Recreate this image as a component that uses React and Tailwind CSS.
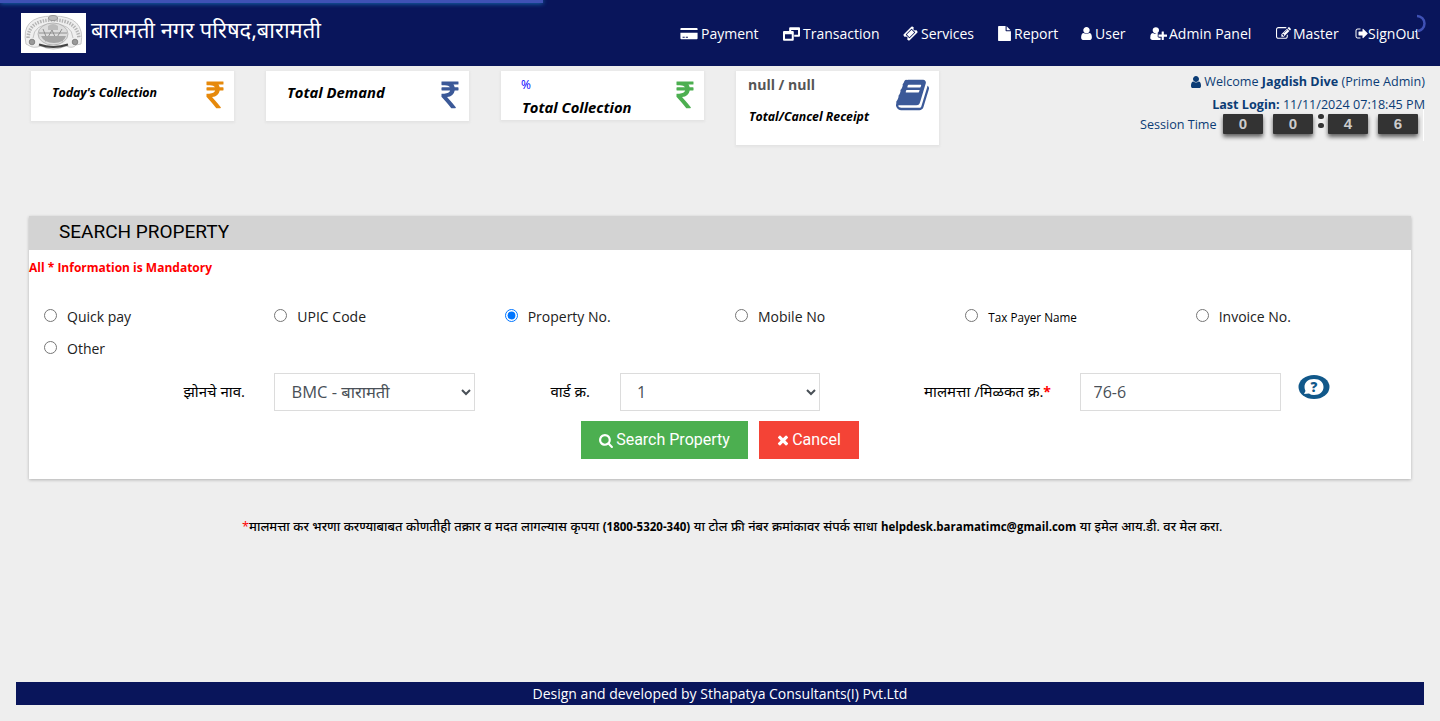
const P = {
  user: [1280, "M1280 1399q0 109-62.5 187t-150.5 78h-854q-88 0-150.5-78t-62.5-187q0-85 8.5-160.5t31.5-152 58.5-131 94-89 134.5-34.5q131 128 313 128t313-128q76 0 134.5 34.5t94 89 58.5 131 31.5 152 8.5 160.5zm-256-887q0 159-112.5 271.5t-271.5 112.5-271.5-112.5-112.5-271.5 112.5-271.5 271.5-112.5 271.5 112.5 112.5 271.5z"],
  userPlus: [2048, "M704 896q-159 0-271.5-112.5t-112.5-271.5 112.5-271.5 271.5-112.5 271.5 112.5 112.5 271.5-112.5 271.5-271.5 112.5zM1664 1024h352q32 0 32 32v192q0 32-32 32h-352v352q0 32-32 32h-192q-32 0-32-32v-352h-352q-32 0-32-32v-192q0-32 32-32h352v-352q0-32 32-32h192q32 0 32 32zM928 1248q0 66 47 113t113 47h192v230q-50 26-110 26h-874q-121 0-194-69.500t-73-189.500q0-390 150-502q70-55 180-55q20 0 50 24q100 70 195 70t195-70q30-24 50-24q110 0 178 60q-99 0-99 110z"],
  file: [1536, "M1024 512v-472q22 14 36 28l408 408q14 14 28 36h-472zm-128 32q0 40 28 68t68 28h544v1056q0 40-28 68t-68 28h-1344q-40 0-68-28t-28-68v-1600q0-40 28-68t68-28h800v544z"],
  edit: [1792, "M888 1184l116-116-152-152-116 116v56h96v96h56zm440-720q-16-16-33 1l-350 350q-17 17-1 33t33-1l350-350q17-17 1-33zm80 594v190q0 119-84.5 203.5t-203.5 84.5h-832q-119 0-203.5-84.5t-84.5-203.5v-832q0-119 84.5-203.5t203.5-84.5h832q63 0 117 25 15 7 18 23 3 17-9 29l-49 49q-14 14-32 8-23-6-45-6h-832q-66 0-113 47t-47 113v832q0 66 47 113t113 47h832q66 0 113-47t47-113v-126q0-13 9-22l64-64q15-15 35-7t20 29zm-96-738l288 288-672 672h-288v-288zm444 132l-92 92-288-288 92-92q28-28 68-28t68 28l152 152q28 28 28 68t-28 68z"],
  signOut: [1664, "M704 1440q0 4 1 20t.5 26.500-3 23.500-10 19.500-20.500 6.500h-320q-119 0-203.500-84.500t-84.500-203.500v-704q0-119 84.500-203.500t203.500-84.500h320q13 0 22.500 9.500t9.500 22.500q0 4 1 20t.5 26.500-3 23.500-10 19.500-20.500 6.500h-320q-66 0-113 47t-47 113v704q0 66 47 113t113 47h312l11.500 1 11.500 3 8 5.500 7 9 2 13.500zm928-544q0 26-19 45l-544 544q-19 19-45 19t-45-19-19-45v-288h-448q-26 0-45-19t-19-45v-384q0-26 19-45t45-19h448v-288q0-26 19-45t45-19 45 19l544 544q19 19 19 45z"],
  card: [2048, "M100 224h1848q100 0 100 100v156H0V324q0-100 100-100zM0 800h2048v668q0 100-100 100H100q-100 0-100-100zM256 1280v128h256v-128zM640 1280v128h256v-128z"],
  restore: [2048, "M860 128h1070q118 0 118 118v930q0 118-118 118h-580v-250h460V480H990v120H742V246q0-118 118-118zM118 600h1060q118 0 118 118v928q0 118-118 118H118q-118 0-118-118V718q0-118 118-118zM240 1000v514h816v-514z"],
  ticket: [1792, "M1024 452l316 316-572 572-316-316zM814 1431l618-618q19-19 19-45t-19-45l-362-362q-18-18-45-18t-45 18l-618 618q-19 19-19 45t19 45l362 362q18 18 45 18t45-18zM1702 794l-907 908q-37 37-90.5 37t-90.500-37l-126-126q56-56 56-136t-56-136-136-56-136 56l-125-126q-37-37-37-90.500t37-90.500l907-906q37-37 90.500-37t90.500 37l125 125q-56 56-56 136t56 136 136 56 136-56l126 125q37 37 37 90.500t-37 90.500z"],
  search: [1664, "M1152 832q0-185-131.5-316.500t-316.500-131.500-316.500 131.500-131.500 316.500 131.500 316.500 316.500 131.500 316.500-131.500 131.500-316.500zm512 832q0 52-38 90t-90 38q-54 0-90-38l-343-342q-179 124-399 124-143 0-273.500-55.500t-225-150-150-225-55.500-273.500 55.500-273.500 150-225 225-150 273.500-55.500 273.500 55.500 225 150 150 225 55.500 273.500q0 220-124 399l343 343q37 37 37 90z"],
  close: [1408, "M1298 1322q0 40-28 68l-136 136q-28 28-68 28t-68-28l-294-294-294 294q-28 28-68 28t-68-28l-136-136q-28-28-28-68t28-68l294-294-294-294q-28-28-28-68t28-68l136-136q28-28 68-28t68 28l294 294 294-294q28-28 68-28t68 28l136 136q28 28 28 68t-28 68l-294 294 294 294q28 28 28 68z"],
  rupee: [898, "M898 470v102q0 14-9 23t-23 9h-168q-23 144-129 234t-276 110q167 178 459 536 14 16 4 34-8 18-29 18h-195q-16 0-25-12-306-367-498-571-9-9-9-22v-127q0-13 9.500-22.500t22.500-9.500h112q132 0 212.500-43t102.500-125h-427q-14 0-23-9t-9-23v-102q0-14 9-23t23-9h413q-57-113-268-113h-145q-13 0-22.500-9.500t-9.500-22.500v-133q0-14 9-23t23-9h832q14 0 23 9t9 23v102q0 14-9 23t-23 9h-233q47 61 64 144h171q14 0 23 9t9 23z"],
  book: [1664, "M1639 478q40 57 18 129l-275 906q-19 64-76.500 107.500t-122.500 43.500h-923q-77 0-148.500-53.500t-99.500-131.500q-24-67-2-127 0-4 3-27t4-37q1-8-3-21.500t-3-19.500q2-11 8-21t16.500-23.500 16.500-23.500q23-38 45-91.500t30-91.500q3-10 .5-30t-.5-28q3-11 17-28t17-23q21-36 42-92t25-90q1-9-2.500-32t.5-28q4-13 22-30.500t22-22.500q19-26 42.500-84.500t27.500-96.500q1-8-3-25.500t-2-26.500q2-8 9-18t18-23 17-21q8-12 16.500-30.500t15-35 16-36 19.500-32 26.500-23.500 36-11.500 47.500 5.500l-1 3q38-9 51-9h761q74 0 114 56t18 130l-274 906q-36 119-71.500 153.500t-128.500 34.500h-869q-27 0-38 15-11 16-1 43 24 70 144 70h923q29 0 56-15.500t35-41.500l300-987q7-22 5-57 38 15 59 43zm-1064 2q-4 13 2 22.500t20 9.500h608q13 0 25.500-9.500t16.500-22.500l21-64q4-13-2-22.500t-20-9.500h-608q-13 0-25.500 9.500t-16.500 22.500zm-83 256q-4 13 2 22.500t20 9.500h608q13 0 25.500-9.500t16.500-22.500l21-64q4-13-2-22.500t-20-9.500h-608q-13 0-25.500 9.500t-16.500 22.500z"],
};

function Icon({ name, className }) {
  return (
    <svg viewBox={`0 0 ${P[name][0]} 1792`} className={`shrink-0 ${className}`} fill="currentColor" fillRule="evenodd">
      <path d={P[name][1]} />
    </svg>
  );
}

function Logo() {
  return (
    <svg viewBox="0 0 65 40" className="mt-[13px] h-10 w-[65px] shrink-0 bg-white" fill="none">
      <path d="M5 31Q-1 3 32 3T60 31L55 32Q52 36 45 33Q32 39 20 33Q12 36 7 32Z" fill="#efefef" stroke="#bbb" strokeWidth="0.800" />
      <path d="M7 25Q8 7 32 7T58 25" stroke="#b5b5b5" strokeWidth="3.500" strokeDasharray="1.500 1.200" />
      <path d="M12 25Q13 11 32 11T52 25" stroke="#c4c4c4" strokeWidth="1" />
      <ellipse cx="32" cy="21" rx="15" ry="11" fill="#ddd" stroke="#aaa" strokeWidth="0.800" />
      <ellipse cx="32" cy="5" rx="4.500" ry="2.500" fill="#bbb" stroke="#888" strokeWidth="0.800" />
      <path d="M18 20h28M22 16l4 10 5-9 4 9 6-10M24 28q8-4 18 0" stroke="#888" strokeWidth="0.900" />
      <path d="M20 23h25q-2 7-12 7t-13-7Z" fill="#a5a5a5" />
      <path d="M27 13q5-4 10 0v4H27Z" fill="#bbb" />
      <path d="M18 31.500q14 5 29 0" stroke="#444" strokeWidth="2" />
      <circle cx="11" cy="29" r="2.800" fill="#999" stroke="#777" strokeWidth="0.800" />
      <circle cx="54" cy="29" r="2.800" fill="#999" stroke="#777" strokeWidth="0.800" />
    </svg>
  );
}

const NAV = [
  ["card", "Payment", "w-[18px] mr-[3px]", "w-[103px]"],
  ["restore", "Transaction", "w-[17px] mr-[3px]", "w-[120px]"],
  ["ticket", "Services", "w-[15px] mr-[3px]", "w-[95px]"],
  ["file", "Report", "w-[13px] mr-[3px]", "w-[83px]"],
  ["user", "User", "w-[11px] mr-[3px]", "w-[69px]"],
  ["userPlus", "Admin Panel", "w-[17px] mr-[2px]", "w-[126px]"],
  ["edit", "Master", "w-[15px] mr-[2px]", "w-[79px]"],
  ["signOut", "SignOut", "w-[13px] mr-0", "w-[68px]"],
];

const RADIOS = ["Quick pay", "UPIC Code", "Property No.", "Mobile No", "Tax Payer Name", "Invoice No.", "Other"];

function Digit({ children, className }) {
  return (
    <span className={`block h-5 w-10 rounded-[1px] bg-[#333] text-center font-['Liberation_Sans',sans-serif] text-[15px]/5 font-bold text-[#ccc] shadow-[0_3px_4px_rgba(0,0,0,0.6)] ${className}`}>
      {children}
    </span>
  );
}

export default function App() {
  return (
    <div className="flex h-[721px] w-[1440px] flex-col overflow-hidden bg-[#eee] font-['Open_Sans','Noto_Sans',sans-serif] text-black">
      <header className="relative flex h-[66px] shrink-0 bg-[#09155b] pl-[21px] text-white">
        <div className="absolute top-0 left-0 h-[3px] w-[543px] bg-[#3f51b5] shadow-[0_0_5px_#29d]" />
        <Logo />
        <h1 className="mt-[11px] ml-[5px] w-[589px] text-[21.900px]/[37px] whitespace-nowrap">बारामती नगर परिषद,बारामती</h1>
        <nav className="mt-[22px] flex h-[22px] items-center text-[14px] whitespace-nowrap">
          {NAV.map(([icon, label, ic, w]) => (
            <a key={label} className={`flex shrink-0 items-center ${w}`}>
              <Icon name={icon} className={`mt-px h-[15px] ${ic}`} />
              {label}
            </a>
          ))}
        </nav>
        <svg className="absolute top-[14px] left-[1408px] h-[18px] w-[18px]" viewBox="0 0 18 18" fill="none">
          <path d="M9 2A7.500 7.500 0 0 1 9 17" stroke="#3f51b5" strokeWidth="2.500" />
        </svg>
      </header>

      <section className="flex h-[150px] shrink-0 items-start pt-[5px] pl-[31px]">
        <div className="mr-8 flex h-[50px] w-[203px] justify-between bg-white pt-[8px] pr-[10px] pl-[21px] shadow-[0_1px_2px_1px_#e4e4e4]">
          <h2 className="mt-[5px] text-[12.400px]/[18px] font-bold tracking-[-0.050px] whitespace-nowrap italic">Today's Collection</h2>
          <Icon name="rupee" className="h-[34px] w-[18px] text-[#e6890b]" />
        </div>
        <div className="mr-8 flex h-[50px] w-[203px] justify-between bg-white pt-[8px] pr-[10px] pl-[21px] shadow-[0_1px_2px_1px_#e4e4e4]">
          <h2 className="mt-[3px] text-[14.800px]/[20px] font-bold whitespace-nowrap italic">Total Demand</h2>
          <Icon name="rupee" className="h-[34px] w-[18px] text-[#3b5998]" />
        </div>
        <div className="mr-8 flex h-[49px] w-[203px] justify-between bg-white pt-[8px] pr-[10px] pl-[21px] shadow-[0_1px_2px_1px_#e4e4e4]">
          <div>
            <p className="-mt-[2px] -ml-px text-[12px]/[16px] text-[#00f]">%</p>
            <h2 className="mt-[4px] text-[14.800px]/[20px] font-bold whitespace-nowrap italic">Total Collection</h2>
          </div>
          <Icon name="rupee" className="h-[34px] w-[18px] text-[#4caf50]" />
        </div>
        <div className="mr-[187px] flex h-[74px] w-[203px] justify-between bg-white pt-1 pr-[10px] pl-3 shadow-[0_1px_2px_1px_#e4e4e4]">
          <div>
            <p className="text-[14px]/[20px] font-bold text-[#555]">null / null</p>
            <h2 className="mt-[13px] ml-px text-[12.300px]/[18px] font-bold whitespace-nowrap italic">Total/Cancel Receipt</h2>
          </div>
          <Icon name="book" className="mt-[2px] h-9 w-[33px] text-[#3b5998]" />
        </div>
        <div className="flex w-[299px] flex-col items-end text-[12.600px] whitespace-nowrap text-[#0b3c75]">
          <p className="flex h-[22px] items-center">
            <Icon name="user" className="mr-[3px] h-[14px] w-[10px]" />
            Welcome&nbsp;<b className="font-bold">Jagdish Dive</b>&nbsp;(Prime Admin)
          </p>
          <p className="h-[16px] leading-[23px]"><b className="font-bold">Last Login:</b> 11/11/2024 07:18:45 PM</p>
          <div className="mr-px flex h-8 w-[285px] items-start border-r border-white pt-[5px]">
            <span className="mr-[5px] ml-px w-[78px] leading-[21px]">Session Time</span>
            <Digit className="mr-[10px]">0</Digit>
            <Digit className="mr-[5px]">0</Digit>
            <span className="mr-1 flex h-[14px] flex-col justify-between">
              <i className="h-[5px] w-[6px] rounded-full bg-[#333]" />
              <i className="h-[5px] w-[6px] rounded-full bg-[#333]" />
            </span>
            <Digit className="mr-[10px]">4</Digit>
            <Digit>6</Digit>
          </div>
        </div>
      </section>

      <main className="mx-[29px] h-[263px] shrink-0 bg-white shadow-[0_1px_3px_rgba(0,0,0,0.25)]">
        <h2 className="h-[34px] bg-[#d3d3d3] pl-[30px] font-[Roboto,sans-serif] text-[19px]/[32px]">SEARCH PROPERTY</h2>
        <p className="h-[50px] pt-[9px] text-[12px]/[18px] font-bold text-[#f00]">All * Information is Mandatory</p>
        <div className="grid grid-cols-6">
          {RADIOS.map((r) => (
            <label key={r} className="flex h-8 items-center pl-[15px] text-[14px] text-[#212121]">
              <input type="radio" name="mode" defaultChecked={r === "Property No."} className="mr-[10px] h-[13px] w-[13px] shrink-0 -translate-y-px" />
              <span className={r === "Tax Payer Name" ? "pt-[3px] text-[11.700px] text-black" : ""}>{r}</span>
            </label>
          ))}
        </div>
        <form className="flex h-[38px] translate-y-[9px] items-center text-[15px] whitespace-nowrap">
          <span className="-mt-[2px] w-[216px] text-right">झोनचे नाव.</span>
          <select className="ml-[29px] h-[38px] w-[201px] border border-[#dcdcdc] bg-white pb-[2px] pl-[12.500px] text-[16.500px] text-[#495057]"><option>BMC - बारामती</option></select>
          <span className="-mt-[2px] w-[115px] text-right">वार्ड क्र.</span>
          <select className="ml-[30px] h-[38px] w-[200px] border border-[#dcdcdc] bg-white pl-[12px] text-base text-[#495057]"><option>1</option></select>
          <span className="-mt-[2px] w-[231px] text-right">मालमत्ता /मिळकत क्र.<b className="text-[14px] text-[#f00]">*</b></span>
          <input defaultValue="76-6" className="ml-[29px] h-[38px] w-[201px] border border-[#dcdcdc] pl-[12.500px] text-base text-[#495057]" />
          <svg viewBox="0 0 32 26" className="-mt-[10px] ml-[17px] h-[26px] w-8">
            <ellipse cx="16" cy="13" rx="15.500" ry="12" fill="#11588a" />
            <path d="M16 5C10 5 6.500 8.500 6.500 13q0 2 1 4l-1.500 3 5-.500q2 1.500 5 1.500c6 0 9.500-3.500 9.500-8S22 5 16 5" fill="#fff" />
            <text x="16" y="17.500" textAnchor="middle" fontSize="13.500" fontWeight="800" fill="#11588a">?</text>
          </svg>
        </form>
        <div className="mt-[19px] ml-[552px] flex gap-[11px] font-[Roboto,sans-serif] text-base text-white">
          <button className="flex h-[38px] w-[167px] items-center justify-center gap-[3px] bg-[#4caf50] whitespace-nowrap"><Icon name="search" className="h-[15px] w-[14px]" />Search Property</button>
          <button className="flex h-[38px] w-[100px] items-center justify-center gap-[3px] bg-[#f44336]"><Icon name="close" className="h-4 w-3" />Cancel</button>
        </div>
      </main>

      <p className="mt-[37px] ml-[242px] text-[12.850px]/[20px] font-medium [word-spacing:0.230px] whitespace-nowrap">
        <span className="text-[#f00]">*</span>मालमत्ता कर भरणा करण्याबाबत कोणतीही तक्रार व मदत लागल्यास कृपया <b className="text-[11.500px] font-bold">(1800-5320-340)</b> या टोल फ्री नंबर क्रमांकावर संपर्क साधा <b className="text-[11.500px] font-bold">helpdesk.baramatimc@gmail.com</b> या इमेल आय.डी. वर मेल करा.
      </p>
      <footer className="mx-4 mt-auto mb-4 h-[23px] bg-[#09155b] text-center text-[14px]/[23px] text-white">Design and developed by Sthapatya Consultants(I) Pvt.Ltd</footer>
    </div>
  );
}
